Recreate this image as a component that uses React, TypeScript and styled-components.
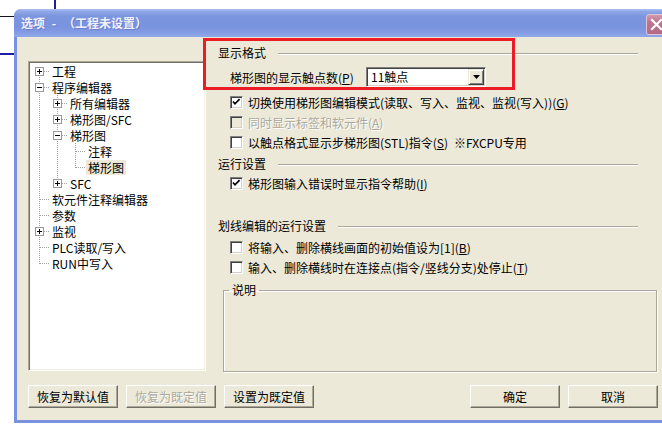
import React from "react";
import styled, { createGlobalStyle, css } from "styled-components";

const Global = createGlobalStyle`
  html, body { margin: 0; padding: 0; background: #ffffff; }
  body {
    width: 662px; height: 429px; overflow: hidden;
    font-family: "Noto Sans CJK SC", "Liberation Sans", sans-serif;
    font-size: 12px; color: #000;
  }
  * { box-sizing: border-box; }
`;

const Page = styled.div`
  position: relative;
  width: 662px;
  height: 429px;
  overflow: hidden;
  padding: 9px 0 0 14px;
`;

const Stroke = styled.div<{ $x: number; $y: number; $w: number; $h: number; $c: string }>`
  position: absolute;
  left: ${(p) => p.$x}px;
  top: ${(p) => p.$y}px;
  width: ${(p) => p.$w}px;
  height: ${(p) => p.$h}px;
  background: ${(p) => p.$c};
`;

const Dialog = styled.div`
  position: relative;
  width: 657px;
  background: #7a92de;
  border-radius: 7px 7px 0 0;
  display: flex;
  flex-direction: column;
`;

const TitleBar = styled.div`
  height: 28px;
  display: flex;
  align-items: flex-start;
  justify-content: space-between;
  padding: 0 4px 0 7px;
  border-radius: 7px 7px 0 0;
  background: linear-gradient(
    to bottom,
    #b2c4f2 0px,
    #91a9e8 2px,
    #7c95df 7px,
    #7a93de 18px,
    #839ce3 24px,
    #8fa8ea 27px,
    #8aa2e5 28px
  );
`;

const Title = styled.span`
  line-height: 28px;
  color: #f0f3fd;
  font-weight: 700;
  font-size: 12px;
  white-space: pre;
  word-spacing: 4px;
  text-shadow: 1px 1px 0 #6a80cf;
`;

const CloseBtn = styled.div`
  margin-top: 5px;
  width: 21px;
  height: 21px;
  border-radius: 3px;
  border: 1px solid #e2c3cf;
  background: linear-gradient(to bottom, #d49aae 0%, #bd7690 35%, #b36a84 100%);
  display: flex;
  align-items: center;
  justify-content: center;
`;

const Frame = styled.div`
  padding: 0 3px 3px;
`;

const Client = styled.div`
  background: #ece9d8;
  height: 383px;
  padding: 5px 10px 0 11px;
  display: grid;
  grid-template-columns: 178px 440px;
  grid-template-rows: 330px 23px;
  column-gap: 12px;
  row-gap: 13px;
`;

/* ---------- Tree ---------- */

const TreeBox = styled.div`
  margin-top: 19px;
  height: 310px;
  background: #ffffff;
  border: 1px solid;
  border-color: #aca899 #ffffff #ffffff #aca899;
  box-shadow: inset 1px 1px 0 #716f64, inset -1px -1px 0 #f1efe2;
  padding: 1px 0 0 2px;
`;

const TreeRow = styled.div`
  display: flex;
  align-items: center;
  height: 16px;
`;

const Cell = styled.svg`
  flex: none;
  display: block;
`;

const NodeLabel = styled.span<{ $selected?: boolean }>`
  margin-left: 1px;
  padding: 0 2px;
  line-height: 15px;
  white-space: nowrap;
  ${(p) =>
    p.$selected &&
    css`
      background: #ece9d8;
    `}
`;

type TreeNode = {
  label: string;
  level: number;
  exp?: "+" | "-";
  guides: boolean[];
  last?: boolean;
  first?: boolean;
  selected?: boolean;
};

const nodes: TreeNode[] = [
  { label: "工程", level: 0, exp: "+", guides: [], first: true },
  { label: "程序编辑器", level: 0, exp: "-", guides: [] },
  { label: "所有编辑器", level: 1, exp: "+", guides: [true] },
  { label: "梯形图/SFC", level: 1, exp: "+", guides: [true] },
  { label: "梯形图", level: 1, exp: "-", guides: [true] },
  { label: "注释", level: 2, guides: [true, true] },
  { label: "梯形图", level: 2, guides: [true, true], last: true, selected: true },
  { label: "SFC", level: 1, exp: "+", guides: [true], last: true },
  { label: "软元件注释编辑器", level: 0, guides: [] },
  { label: "参数", level: 0, guides: [] },
  { label: "监视", level: 0, exp: "+", guides: [] },
  { label: "PLC读取/写入", level: 0, guides: [] },
  { label: "RUN中写入", level: 0, guides: [], last: true },
];

const DOT = "#a0a0a0";

const Guide = ({ line }: { line: boolean }) => (
  <Cell width="18" height="16" viewBox="0 0 18 16">
    {line && (
      <line x1="8.5" y1="0" x2="8.5" y2="16" stroke={DOT} strokeWidth="1" strokeDasharray="1 1" />
    )}
  </Cell>
);

const Connector = ({ node }: { node: TreeNode }) => (
  <Cell width="18" height="16" viewBox="0 0 18 16">
    <line
      x1="8.5"
      y1={node.first ? 8 : 0}
      x2="8.5"
      y2={node.last ? 9 : 16}
      stroke={DOT}
      strokeWidth="1"
      strokeDasharray="1 1"
    />
    <line x1="9" y1="8.5" x2="18" y2="8.5" stroke={DOT} strokeWidth="1" strokeDasharray="1 1" />
    {node.exp && (
      <g>
        <rect x="4.5" y="4.5" width="8" height="8" fill="#ffffff" stroke="#919b9c" strokeWidth="1" />
        <line x1="6" y1="8.5" x2="11" y2="8.5" stroke="#000" strokeWidth="1" />
        {node.exp === "+" && <line x1="8.5" y1="6" x2="8.5" y2="11" stroke="#000" strokeWidth="1" />}
      </g>
    )}
  </Cell>
);

const Tree = () => (
  <TreeBox>
    {nodes.map((n, i) => (
      <TreeRow key={i}>
        {n.guides.map((g, j) => (
          <Guide key={j} line={g} />
        ))}
        <Connector node={n} />
        <NodeLabel $selected={n.selected}>{n.label}</NodeLabel>
      </TreeRow>
    ))}
  </TreeBox>
);

/* ---------- Right panel ---------- */

const Panel = styled.div`
  display: flex;
  flex-direction: column;
`;

const GroupHeader = styled.div<{ $mt?: number }>`
  display: flex;
  align-items: center;
  height: 20px;
  margin-top: ${(p) => p.$mt ?? 0}px;
  margin-right: 20px;
  white-space: nowrap;
  &::after {
    content: "";
    flex: 1;
    height: 0;
    margin: 3px 0 0 12px;
    border-top: 1px solid #aca899;
    border-bottom: 1px solid #ffffff;
  }
`;

const Row = styled.div<{ $mt?: number }>`
  display: flex;
  align-items: center;
  height: 20px;
  margin-top: ${(p) => p.$mt ?? 0}px;
  padding-left: 12px;
  white-space: nowrap;
`;

const Text = styled.span<{ $disabled?: boolean }>`
  ${(p) =>
    p.$disabled &&
    css`
      color: #aca899;
      text-shadow: 1px 1px 0 #ffffff;
    `}
`;

const Key = styled.span`
  text-decoration: underline;
  text-underline-offset: 1px;
`;

const FieldLabel = styled.span`
  width: 136px;
  flex: none;
`;

const Combo = styled.div`
  width: 120px;
  height: 20px;
  background: #ffffff;
  border: 1px solid;
  border-color: #808080 #ffffff #ffffff #808080;
  box-shadow: inset 1px 1px 0 #404040, inset -1px -1px 0 #d4d0c8;
  display: flex;
  align-items: center;
  justify-content: space-between;
  padding: 1px;
`;

const ComboText = styled.span`
  padding-left: 3px;
  line-height: 16px;
`;

const ComboButton = styled.div`
  width: 16px;
  height: 16px;
  background: #ece9d8;
  border: 1px solid;
  border-color: #ece9d8 #404040 #404040 #ece9d8;
  box-shadow: inset 1px 1px 0 #ffffff, inset -1px -1px 0 #808080;
  display: flex;
  align-items: center;
  justify-content: center;
`;

const Box = styled.span<{ $disabled?: boolean }>`
  width: 13px;
  height: 13px;
  flex: none;
  margin-right: 5px;
  border: 1px solid;
  border-color: #808080 #ffffff #ffffff #808080;
  box-shadow: inset 1px 1px 0 #404040, inset -1px -1px 0 #d4d0c8;
  background: ${(p) => (p.$disabled ? "#ece9d8" : "#ffffff")};
  display: flex;
`;

const Check = ({ checked, disabled }: { checked?: boolean; disabled?: boolean }) => (
  <Box $disabled={disabled}>
    {checked && (
      <svg width="11" height="11" viewBox="0 0 11 11">
        <polyline points="2,4.5 4,6.8 8.6,2.2" fill="none" stroke="#000" strokeWidth="1.7" />
      </svg>
    )}
  </Box>
);

const Note = styled.span`
  margin-left: 6px;
`;

const GroupBox = styled.fieldset`
  flex: 1;
  margin: 6px 1px 0 5px;
  padding: 0;
  min-width: 0;
  border: 1px solid #aca899;
  box-shadow: inset 1px 1px 0 #ffffff, 1px 1px 0 #ffffff;
`;

const Legend = styled.legend`
  margin-left: 5px;
  padding: 0 3px 0 3px;
  line-height: 14px;
`;

/* ---------- Buttons ---------- */

const ButtonBar = styled.div`
  grid-column: 1 / span 2;
  display: flex;
  justify-content: space-between;
`;

const ButtonGroup = styled.div`
  display: flex;
  gap: 8px;
`;

const Button = styled.div<{ $disabled?: boolean }>`
  width: 90px;
  height: 23px;
  display: flex;
  align-items: center;
  justify-content: center;
  background: #ece9d8;
  border: 1px solid;
  border-color: #ffffff #716f64 #716f64 #ffffff;
  box-shadow: inset -1px -1px 0 #aca899;
  white-space: nowrap;
  ${(p) =>
    p.$disabled &&
    css`
      color: #aca899;
      text-shadow: 1px 1px 0 #ffffff;
    `}
`;

const Annotation = styled.div`
  position: absolute;
  left: 203px;
  top: 38px;
  width: 312px;
  height: 52px;
  border: 3px solid #ec1c24;
  pointer-events: none;
`;

export default function App() {
  return (
    <>
      <Global />
      <Page>
        <Stroke $x={54} $y={0} $w={2} $h={10} $c="#1c1ca6" />
        <Stroke $x={0} $y={16} $w={14} $h={1} $c="#141420" />
        <Stroke $x={0} $y={53} $w={14} $h={2} $c="#1c1ca6" />
        <Dialog>
          <TitleBar>
            <Title>选项 - （工程未设置）</Title>
            <CloseBtn>
              <svg width="13" height="13" viewBox="0 0 13 13">
                <path d="M2 2 L11 11 M11 2 L2 11" stroke="#ffffff" strokeWidth="2.2" strokeLinecap="square" />
              </svg>
            </CloseBtn>
          </TitleBar>
          <Frame>
            <Client>
              <Tree />
              <Panel>
                <GroupHeader>显示格式</GroupHeader>
                <Row $mt={5}>
                  <FieldLabel>
                    梯形图的显示触点数(<Key>P</Key>)
                  </FieldLabel>
                  <Combo>
                    <ComboText>11触点</ComboText>
                    <ComboButton>
                      <svg width="7" height="4" viewBox="0 0 7 4">
                        <path d="M0 0 H7 L3.5 4 Z" fill="#000" />
                      </svg>
                    </ComboButton>
                  </Combo>
                </Row>
                <Row $mt={5}>
                  <Check checked />
                  <Text>
                    切换使用梯形图编辑模式(读取、写入、监视、监视(写入))(<Key>G</Key>)
                  </Text>
                </Row>
                <Row>
                  <Check disabled />
                  <Text $disabled>
                    同时显示标签和软元件(<Key>A</Key>)
                  </Text>
                </Row>
                <Row>
                  <Check />
                  <Text>
                    以触点格式显示步梯形图(STL)指令(<Key>S</Key>)
                  </Text>
                  <Note>※FXCPU专用</Note>
                </Row>
                <GroupHeader $mt={1}>运行设置</GroupHeader>
                <Row>
                  <Check checked />
                  <Text>
                    梯形图输入错误时显示指令帮助(<Key>I</Key>)
                  </Text>
                </Row>
                <GroupHeader $mt={22}>划线编辑的运行设置</GroupHeader>
                <Row $mt={2}>
                  <Check />
                  <Text>
                    将输入、删除横线画面的初始值设为[1](<Key>B</Key>)
                  </Text>
                </Row>
                <Row>
                  <Check />
                  <Text>
                    输入、删除横线时在连接点(指令/竖线分支)处停止(<Key>T</Key>)
                  </Text>
                </Row>
                <GroupBox>
                  <Legend>说明</Legend>
                </GroupBox>
              </Panel>
              <ButtonBar>
                <ButtonGroup>
                  <Button>恢复为默认值</Button>
                  <Button $disabled>恢复为既定值</Button>
                  <Button>设置为既定值</Button>
                </ButtonGroup>
                <ButtonGroup>
                  <Button>确定</Button>
                  <Button>取消</Button>
                </ButtonGroup>
              </ButtonBar>
            </Client>
          </Frame>
        </Dialog>
        <Annotation />
      </Page>
    </>
  );
}
